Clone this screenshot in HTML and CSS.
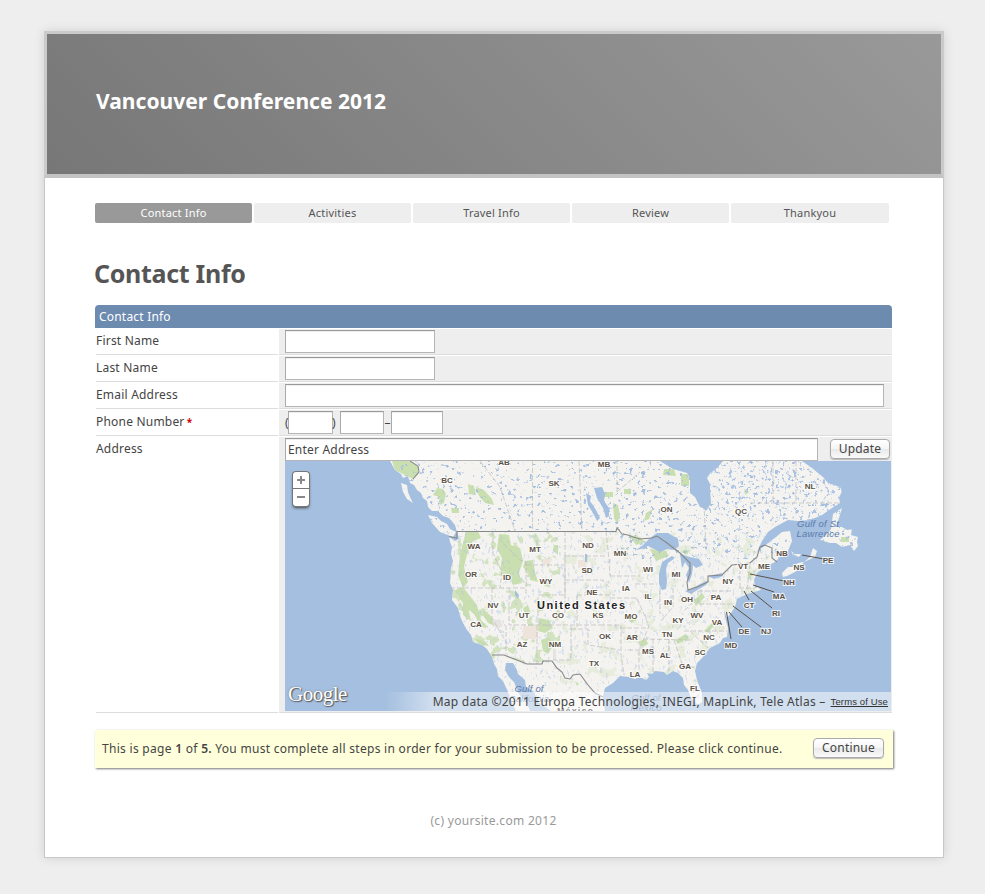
FILE: index.html
```html
<!DOCTYPE html>
<html lang="en">
<head>
<meta charset="utf-8">
<title>Vancouver Conference 2012</title>
<link rel="stylesheet" href="styles.css">
</head>
<body>
<div class="page">
  <header class="banner"><div class="site-title">Vancouver Conference 2012</div></header>
  <main class="content">
    <nav class="steps">
      <span class="step active">Contact Info</span><span class="step">Activities</span><span class="step">Travel Info</span><span class="step">Review</span><span class="step">Thankyou</span>
    </nav>
    <h1><span>Contact Info</span></h1>
    <form class="form">
      <div class="form-head">Contact Info</div>
      <div class="row"><label>First Name</label><div class="value"><input class="medium" type="text"></div></div>
      <div class="row"><label>Last Name</label><div class="value"><input class="medium" type="text"></div></div>
      <div class="row"><label>Email Address</label><div class="value"><input class="wide" type="text"></div></div>
      <div class="row"><label>Phone Number <b class="required">*</b></label><div class="value phone"><span class="open">(</span><input class="area" type="text"><span class="close">)</span><input class="prefix" type="text"><span class="dash">–</span><input class="line" type="text"></div></div>
      <div class="row address"><label>Address</label>
        <div class="value">
          <div class="address-bar"><input class="street" type="text" value="Enter Address"><button type="button" class="button update">Update</button></div>
          <div class="map">
            <svg class="map-art" viewBox="285 461 606 250" width="606" height="250">
              <defs>
                <path id="land" d="M390 461L395 470 401 474 403 478 408 476 410 483 414 485 417 490 421 493 423 498 427 501 428 507 432 511 438 511 443 516 449 518 455 525 457 532 459 539 455 541 449 537 450 542 452 547 451 554 453 561 451 568 450 583 453 590 452 600 458 608 460 616 463 623 467 630 471 635 473 642 482 645 487 649 492 657 494 664 497 669 498 676 503 681 508 692 510 699 516 711H530L527 703 519 694 514 682 509 677 505 670 506 663 513 663 517 670 518 674 525 680 526 687 534 692 538 702 551 711H605L603 696 605 688 613 683 620 676 629 677 635 679 640 677 646 680 649 677 647 673 652 674 655 671 664 672 667 675 673 671 678 673 683 678 684 685 688 690 691 698 698 705 702 702 702 693 697 680 695 671 697 663 703 657 710 648 720 643 723 638 727 637 728 628 725 617 724 610 727 618 731 613 735 607 737 599 747 594 761 590 758 587 755 588 754 580 757 573 765 567 775 562 780 557 788 551 792 541 790 531 782 532 776 537 768 543 757 552 762 541 768 532 775 527 788 520 798 521 810 520 822 515 832 508 840 503 839 498 842 491 840 487 828 483 823 477 818 473 812 468 802 461H723L717 468 710 473 707 478 710 484 710 490 711 503 706 511 703 508 700 507 695 497 690 493 690 478 687 473 673 469 660 461Z
                M428 515L437 517 441 521 447 524 450 529 456 532 453 537 445 534 440 532 432 523Z
                M401 483L407 485 408 492 410 497 413 503 407 499 403 492Z
                M782 573L788 567 792 567 798 563 804 562 810 557 813 548 817 551 815 557 804 562 799 568 795 572 787 576 783 577Z
                M791 551L795 554 801 554 799 557 793 555Z
                M820 540L826 535 831 529 833 514 842 508 839 518 836 527 842 527 847 530 852 529 851 535 858 537 857 542 858 546 854 551 850 545 842 547 836 543 830 543Z"/>
                <clipPath id="land-clip"><use href="#land"/></clipPath>
                <filter id="lakes" x="0" y="0" width="1" height="1" color-interpolation-filters="sRGB"><feTurbulence type="fractalNoise" baseFrequency=".24 .28" numOctaves="3" seed="8"/><feColorMatrix values="0 0 0 0 .65 0 0 0 0 .75 0 0 0 0 .88 10 0 0 0 -6.350"/></filter>
                <filter id="streams" x="0" y="0" width="1" height="1" color-interpolation-filters="sRGB"><feTurbulence type="fractalNoise" baseFrequency=".34 .2" numOctaves="3" seed="21"/><feColorMatrix values="0 0 0 0 .67 0 0 0 0 .77 0 0 0 0 .9 10 0 0 0 -6.200"/></filter>
                <filter id="parks" x="0" y="0" width="1" height="1" color-interpolation-filters="sRGB"><feTurbulence type="fractalNoise" baseFrequency=".09" numOctaves="3" seed="5"/><feColorMatrix values="0 0 0 0 .79 0 0 0 0 .87 0 0 0 0 .69 0 18 0 0 -10.700"/></filter>
              </defs>
              <rect x="285" y="461" width="606" height="250" fill="#a4bfdf"/>
              <use href="#land" fill="#f4f3f0"/>
              <g clip-path="url(#land-clip)">
                <g fill="#cadfb0">
                  <path d="M392 461H409L419 467 418 474 413 479 405 475 395 470Z"/>
                  <path d="M437 488l6 1 3 5-2 9-4 2-1-8-6-2zM451 508h8v5h-7zM468 484l6 2 2 9-7-1zM476 487l8 3 8 9 2 6-9-2-6-7zM466 531h12l3 7-8 3-6 14-3 12 4 15-5 6-5-13 2-20z"/>
                  <path d="M499 534l10 1 2 10 9 3 3 13-4 12 3 10-9 2-5-12-8-3 2-12-5-9zM525 561l8-1 2 12 3 10-8-2-1-8-6-5zM554 545h4v10l-5-5z"/>
                  <path d="M455 590l8-3 7 9 7 9 4 15 7 7-6 1-8-14-9-7zM463 603l5 4 3 14-8-6zM473 638l12 3 4 5-9-1zM483 609l8 7 4 10-7-3-5-8zM523 608l5-3 3 8-6 2zM539 618l10 2 4 8-8 5-7-2zM541 640l8-3 4 9-5 8-5-3z"/>
                  <path d="M604 492h9v5h-9zM624 489h7v5h-7zM613 503l5 2 2 11-3 8-3-6zM664 469h10l2 7-13-1zM681 474h8v12h-8zM629 535l11 2 5 5-9 3zM646 513l7-4-4 10-5 2zM650 549l16 2 3 5-13 5zM684 549l5 2-2 4-5-3zM675 640l11-6 3 4-11 6zM704 631l8-8 3 1-7 9zM747 571l6 2-3 7zM693 601l9-8 3 4-9 9zM679 693l7 1 5 10-8-4z"/>
                  <path d="M841 537h8v5h-8zM744 489l5 3-4 3zM628 620l5-4 4 4-5 3zM638 642l8-3 2 5-6 3zM575 681l4 3-2 2z"/>
                </g>
                <rect x="440" y="532" width="120" height="130" filter="url(#parks)" opacity=".75"/>
                <rect x="560" y="532" width="220" height="160" filter="url(#parks)" opacity=".3"/>
                <rect x="400" y="461" width="290" height="71" filter="url(#lakes)"/>
                <rect x="617" y="461" width="245" height="98" filter="url(#lakes)"/>
                <rect x="705" y="461" width="138" height="60" filter="url(#streams)"/>
                <rect x="430" y="532" width="350" height="170" filter="url(#streams)" opacity=".42"/>
                <g fill="#eee4dc"><path d="M523 626h15v13h-15zM578 560h8v7h-8zM543 559h7v5h-7z"/><path fill="#e6e3e0" d="M492 621l8-2 3 7-6 3zM553 649h3v11h-3z"/></g>
                <path fill="#a4bfdf" d="M636 550L643 545 650 538 657 533 668 533 678 539 679 546 674 550 667 549 660 552 654 549 648 546 641 549ZM672 556L662 562 659 574 659 584 662 590 666 589 667 581 666 569 668 563 675 558ZM680 554L690 557 699 559 703 565 696 568 693 565 692 574 689 583 686 575 689 568 685 562 682 568 681 561ZM685 591L693 588 702 583 709 580 706 585 699 589 691 594ZM708 576L722 573 723 576 714 579ZM594 488L602 487 605 494 604 501 609 508 609 516 606 518 603 508 597 498ZM586 493L591 496 590 501 596 510 600 518 597 521 593 513 588 505ZM515 590L519 595 518 599 515 595ZM585 554h2v8h-2zM585 568l3 3-1 4-3-4z"/>
              </g>
              <g class="state-lines">
                <path d="M480 461L500 487 515 531M532.500 461V531M579 461 582 531M617 492V461M617 492L640 472M493 531V553L502 572 500 588M499 539L520 560 526 562V595M492 588V618L506 642M450 588H526M509 588V625H600M526 565H565V595H538V625M565 531V613M565 556H606M565 580H602L610 588M606 531L609 560 610 576M610 576H640M577 595H615M577 595V627M537 625V664M506 625V654M571 625V660H553M571 629H588V645L620 650M600 625H621V655L624 675M610 598H637L643 612 649 626 639 650V675M620 628H646M640 650H625M643 639L690 640M635 584H657M660 590V614M673 588V607L661 621M690 590 695 600 684 611M653 639V672M669 639V671M674 640L683 667H696M684 631H727M690 631L708 648M698 591H731M698 591V604H733M740 562V590M750 564 747 590M739 588H755M773 461V503M750 503H840M796 461V503M704 504 706 548"/>
              </g>
              <path class="border-line" d="M413 479L419 472 418 466 410 461M449 536.500L457 538V531.500H616L617 528 622 534 628 535 633 537 640 539 652 538 657 536 667 543 680 553 690 563 690 573 687 582 688 590 697 587 708 582V576L722 575 732 565 750 563 757 557 760 547 765 545 772 548V558L777 562M492 655L504 655 527 664H542L543 661H552L557 668 562 672 565 678 570 679 573 675 580 674 588 685 595 693 603 697"/>
              <path class="pointer" d="M802 555L824 559M750 574L784 581M753 585L774 592M744 591L749 600M751 591L772 608M733 606L761 627M729 612L742 627M726.500 612L731 639"/>
              <g class="states">
                <text x="447" y="483">BC</text><text x="504" y="464.500">AB</text><text x="554" y="486">SK</text><text x="604" y="467">MB</text><text x="666.500" y="512">ON</text><text x="741" y="514">QC</text><text x="810" y="489">NL</text><text x="782" y="556">NB</text><text x="799" y="570">NS</text><text x="828" y="563">PE</text>
                <text x="474" y="549">WA</text><text x="471" y="577">OR</text><text x="507" y="580">ID</text><text x="535" y="552">MT</text><text x="588" y="548">ND</text><text x="620" y="556">MN</text><text x="587" y="573">SD</text><text x="546" y="584">WY</text><text x="592" y="595">NE</text><text x="648" y="572">WI</text><text x="676" y="577">MI</text><text x="626" y="591">IA</text><text x="648" y="599">IL</text><text x="668" y="605">IN</text><text x="687" y="602">OH</text><text x="493" y="608">NV</text><text x="476" y="627">CA</text><text x="524" y="618">UT</text><text x="558" y="618">CO</text><text x="598" y="618">KS</text><text x="631" y="619">MO</text><text x="678" y="623">KY</text><text x="697" y="618">WV</text><text x="717" y="625">VA</text><text x="605" y="639">OK</text><text x="632" y="640">AR</text><text x="667" y="637">TN</text><text x="709" y="640">NC</text><text x="522" y="647">AZ</text><text x="555" y="647">NM</text><text x="594" y="666">TX</text><text x="648" y="654">MS</text><text x="665" y="658">AL</text><text x="700" y="655">SC</text><text x="685" y="669">GA</text><text x="635" y="677">LA</text><text x="695" y="691">FL</text><text x="728" y="584">NY</text><text x="743" y="569">VT</text><text x="764" y="569">ME</text><text x="716" y="600">PA</text><text x="789" y="585">NH</text><text x="779" y="599">MA</text><text x="749" y="608">CT</text><text x="776" y="616">RI</text><text x="744" y="634">DE</text><text x="766" y="634">NJ</text><text x="731" y="648">MD</text>
              </g>
              <text class="country" x="537" y="609" textLength="88">United States</text>
              <text class="country small" x="557" y="714" textLength="36">México</text>
              <g class="water"><text x="818" y="527" textLength="42">Gulf of St</text><text x="818" y="536.500" textLength="43">Lawrence</text><text x="529" y="692" textLength="29">Gulf of</text><text x="529" y="702" textLength="40">California</text><text x="646" y="701" textLength="29">Gulf of</text><text x="646" y="711" textLength="31">Mexico</text></g>
            </svg>
            <div class="zoom"><span class="plus"></span><span class="minus"></span></div>
            <div class="logo">Google</div>
            <div class="credits"><span class="credit-text">Map data ©2011 Europa Technologies, INEGI, MapLink, Tele Atlas –</span><a class="terms">Terms of Use</a></div>
          </div>
        </div>
      </div>
    </form>
    <div class="notice"><span class="notice-text">This is page <b>1</b> of <b>5.</b> You must complete all steps in order for your submission to be processed. Please click continue.</span><button type="button" class="button continue">Continue</button></div>
  </main>
  <footer>(c) yoursite.com 2012</footer>
</div>
</body>
</html>
```
FILE: styles.css
```css
* { box-sizing: border-box; }
body { margin: 0; padding: 31px 41px 36px 44px; background: #eee; color: #444; font: 12px/16px "Noto Sans", "Open Sans", sans-serif; letter-spacing: .2px; }
.page { width: 900px; height: 827px; border: 1px solid #c8c8c8; border-top: 0; background: #fff; box-shadow: 0 0 10px rgba(0,0,0,.12); }
.banner { height: 147px; margin: 0 -1px; border: 3px solid #cacaca; border-bottom: 4px solid #c3c3c3; background: linear-gradient(45deg, #777, #999) padding-box; padding: 52px 49px 0; }
.site-title { color: #fff; font-weight: 700; font-size: 21px; line-height: 30px; letter-spacing: .03px; white-space: nowrap; }
.content { padding: 25px 50px 0; }
.steps { display: flex; gap: 2px; width: 794px; }
.step { flex: 0 0 157px; height: 20px; border-radius: 2px; background: #eee; text-align: center; font-size: 11px; line-height: 20px; color: #555; }
.step:last-child { flex: 1; }
.step.active { background: #999; color: #fff; }
h1 { margin: 33px 0 15px -1px; font-size: 25px; line-height: 34px; color: #555; letter-spacing: -.3px; }
.form { width: 797px; }
.form-head { height: 23px; border-radius: 4px 4px 0 0; background: #6d8aaf; color: #fff; padding: 0 4px; line-height: 23px; }
.row { display: flex; gap: 1px; padding: 1px 0 0 1px; height: 27px; }
.row label { width: 182px; border-bottom: 1px solid #ddd; line-height: 24px; letter-spacing: .2px; }
.value { flex: 1; display: flex; align-items: flex-start; padding: 1px 0 0 6px; border-bottom: 1px solid #ddd; background: #eee; }
.required { color: #c00; font-weight: 700; font-size: 10px; margin-left: -1px; }
input { height: 23px; border: 1px solid #b5b5b5; border-top-color: #999; border-left-color: #aaa; padding: 0 3px 1px 2px; background: #fff; color: #444; font: inherit; letter-spacing: inherit; outline: 0; box-shadow: inset 0 1px 0 #eee; }
.medium { width: 150px; } .wide { width: 599px; }
.area { width: 45px; } .prefix { width: 44px; } .line { width: 52px; }
.phone span { line-height: 23px; letter-spacing: 0; }
.open { width: 3px; } .close { width: 7px; text-indent: -1px; } .dash { width: 7px; text-align: center; }
.address { height: 277px; }
.address .value { display: block; }
.address-bar { display: flex; gap: 12px; height: 23px; }
.street { width: 533px; }
.button { height: 20px; padding: 0; border: 1px solid #aaa; border-radius: 4px; background: linear-gradient(#fff, #f5f5f5 50%, #e9e9e9 51%, #fafafa); color: #444; font: inherit; letter-spacing: .2px; line-height: 16px; box-shadow: 0 1px 1px #bbb; }
.update { width: 60px; margin-top: 1px; }
.map { position: relative; width: 606px; height: 250px; overflow: hidden; border-top: 0; }
.map-art { display: block; }
.state-lines { fill: none; stroke: #bbb; stroke-width: .7; stroke-dasharray: 5 2; }
.border-line { fill: none; stroke: #888; stroke-width: 1.1; }
.pointer { fill: none; stroke: #5b5048; stroke-width: 1; }
.states, .country { font-family: "Liberation Sans", Arial, sans-serif; fill: #5b5146; stroke: #fff; stroke-opacity: .8; stroke-width: 2px; paint-order: stroke; letter-spacing: 0; }
.states { font-size: 8px; font-weight: 700; text-anchor: middle; }
.country { font-size: 11px; font-weight: 700; fill: #222; }
.country.small { font-size: 9px; }
.water { font: italic 9.5px "Liberation Sans", Arial, sans-serif; fill: #5c7cab; text-anchor: middle; letter-spacing: 0; }
.zoom { position: absolute; left: 8px; top: 11px; width: 16px; height: 34px; background: #fff; border-radius: 3px; box-shadow: 0 0 0 1px #777, 0 2px 3px #444; }
.zoom span { display: block; position: relative; height: 17px; }
.zoom .plus { border-bottom: 1px solid #777; }
.zoom span::before, .zoom .plus::after { content: ""; position: absolute; left: 4px; top: 7px; width: 8px; height: 2px; background: #888; }
.zoom .plus::after { left: 7px; top: 4px; width: 2px; height: 8px; }
.logo { position: absolute; left: 3px; top: 221px; color: #fff; font: 21px/24px "Liberation Serif", serif; letter-spacing: -.5px; text-shadow: 1px 1px 1px #555, 0 0 2px #777; }
.credits { position: absolute; right: 0; bottom: 0; width: 506px; height: 19px; display: flex; align-items: center; justify-content: flex-end; padding-right: 3px; background: linear-gradient(90deg, rgba(255,255,255,0), rgba(255,255,255,.5) 50px); white-space: nowrap; letter-spacing: .26px; }
.terms { margin-left: 5px; font: 9.5px/14px "Liberation Sans", Arial, sans-serif; letter-spacing: .12px; text-decoration: underline; color: #333; }
.notice { width: 798px; height: 38px; margin-top: 17px; padding: 0 9px 0 7px; display: flex; align-items: center; justify-content: space-between; background: #ffffdb; box-shadow: 1px 1px 2px #777; white-space: nowrap; letter-spacing: .29px; }
.notice b { font-weight: 600; }
.continue { width: 71px; margin-top: -2px; }
footer { margin-top: 45px; margin-left: -1px; text-align: center; color: #999; letter-spacing: .3px; }
```
